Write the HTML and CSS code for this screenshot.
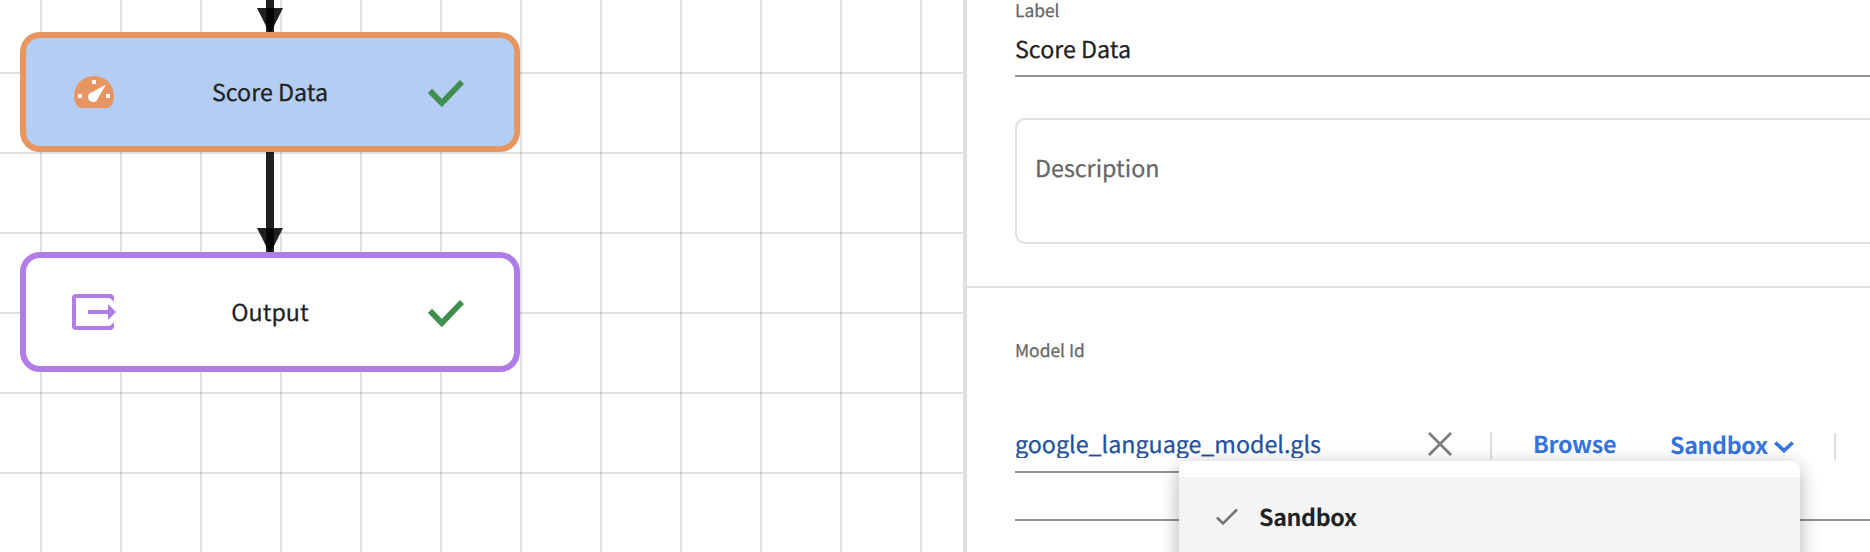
FILE: index.html
```html
<!DOCTYPE html>
<html lang="en">
<head>
<meta charset="utf-8">
<title>Score Data</title>
<link rel="stylesheet" href="styles.css">
</head>
<body>
<div class="app">
  <main class="canvas">
    <svg class="edges" width="963" height="552" viewBox="0 0 963 552">
      <g fill="#000" fill-opacity=".87">
        <path d="M266 0h8v32h-8z"/>
        <path d="M257 8h26l-12 24h-2z"/>
        <path d="M266 152h8v100h-8z"/>
        <path d="M257 228h26l-12 24h-2z"/>
      </g>
    </svg>
    <div class="node node-score">
      <svg class="node-icon" width="48" height="48" viewBox="0 0 48 48">
        <path fill="#e89661" d="M10 40C5.500 38 4 32 4 28a20 20 0 0 1 40 0c0 4-1.500 10-6 12z"/>
        <path fill="#fff" d="M22 12h4v4h-4zM8 26h4v4H8zM36 26h4v4h-4zM36 16.500L28.300 29.500C27.500 32.500 25.500 34 23 34a5 5 0 0 1-5-5c0-2.500 1.700-4.600 4.500-5z"/>
      </svg>
      <span class="node-title">Score Data</span>
      <svg class="node-check" width="36" height="28" viewBox="0 0 36 28"><path d="M2 10.800L13.800 23 34 2" fill="none" stroke="#418f50" stroke-width="5.800"/></svg>
    </div>
    <div class="node node-output">
      <svg class="node-icon" width="48" height="48" viewBox="0 0 48 48">
        <path fill="#b17ce5" d="M5 6h36q3 1 3 3v5l-4-4H6v28h34l4-4v5q0 2-3 3H5q-3-1-3-3V9q0-2 3-3z"/>
        <path fill="#b17ce5" d="M18 22h20v-6l8 8-8 8v-6H18z"/>
      </svg>
      <span class="node-title">Output</span>
      <svg class="node-check" width="36" height="28" viewBox="0 0 36 28"><path d="M2 10.800L13.800 23 34 2" fill="none" stroke="#418f50" stroke-width="5.800"/></svg>
    </div>
  </main>
  <aside class="panel">
    <section class="general">
      <div class="label">Label</div>
      <div class="input">Score Data</div>
      <div class="description">Description</div>
    </section>
    <section class="model">
      <div class="label">Model Id</div>
      <div class="model-row">
        <div class="model-field"><span class="model-name">google_language_model.gls</span>
          <svg class="clear" width="24" height="24" viewBox="0 0 24 24"><path d="M1 1l22 22M23 1L1 23" stroke="#7d7d7d" stroke-width="2.800"/></svg>
        </div>
        <span class="separator"></span>
        <span class="action browse">Browse</span>
        <span class="action source">Sandbox</span>
        <svg class="chevron" width="20" height="12" viewBox="0 0 20 12"><path d="M1.200 1.500L10 9.500l8.800-8" fill="none" stroke="#3574dc" stroke-width="3.600"/></svg>
        <span class="separator end"></span>
      </div>
      <div class="rule"></div>
      <div class="menu">
        <div class="menu-item">
          <svg width="22" height="18" viewBox="0 0 22 18"><path d="M1 9.500L7 15.500 21 1.500" fill="none" stroke="#767676" stroke-width="2.600"/></svg>
          <span class="menu-text">Sandbox</span>
        </div>
      </div>
    </section>
  </aside>
</div>
</body>
</html>
```

FILE: styles.css
```css
* { box-sizing: border-box; }
body {
  margin: 0;
  background: #fff;
  color: #212121;
  font-family: "Noto Sans CJK SC", "Noto Sans", sans-serif;
  font-size: 23.25px;
  line-height: 36px;
  text-rendering: geometricPrecision;
  -webkit-text-stroke: .25px;
}
svg { display: block; flex: none; }
.app { position: relative; display: flex; width: 1870px; height: 552px; overflow: hidden; }
.canvas {
  position: relative;
  width: 963px;
  flex: none;
  background-color: #fff;
  background-image:
    linear-gradient(90deg, rgba(0,0,0,.12) 2px, transparent 2px),
    linear-gradient(rgba(0,0,0,.12) 2px, transparent 2px);
  background-size: 80px 80px;
  background-position: 40px 72px;
}
.edges { position: absolute; left: 0; top: 0; }
.node {
  position: absolute;
  left: 20px;
  width: 500px;
  height: 120px;
  border: 6px solid;
  border-radius: 20px;
  display: grid;
  grid-template-columns: 48px 1fr 36px;
  align-items: center;
  padding: 0 50px 0 44px;
}
.node-score { top: 32px; background: #b4cdf3; border-color: #e89661; }
.node-output { top: 252px; background: #fff; border-color: #b17ce5; }
.node-title { justify-self: center; padding: 0 6px 2px 0; }
.node-check { margin-top: 4px; }

.panel { flex: 1; border-left: 4px solid #e0e0e0; }
.general { height: 288px; padding-left: 48px; border-bottom: 2px solid #e0e0e0; }
.label { height: 32px; font-size: 17.4px; line-height: 34px; color: #666; }
.general .label { height: 27px; line-height: 21px; }
.input { height: 50px; line-height: 42px; border-bottom: 2px solid #919191; }
.description {
  height: 126px;
  margin-top: 41px;
  padding: 29px 18px;
  border: 2px solid #e0e0e0;
  border-right: 0;
  border-radius: 10px 0 0 10px;
  color: #666;
}
.model { position: relative; height: 264px; padding: 46px 0 0 48px; }
.model-row { display: flex; height: 107px; padding-top: 51px; }
.model-field {
  width: 437px;
  height: 56px;
  display: flex;
  justify-content: space-between;
  border-bottom: 2px solid #919191;
  color: #23509c;
}
.model-name { height: 41px; line-height: 52px; overflow: hidden; }
.clear { margin-top: 15px; }
.separator { width: 2px; height: 27px; margin: 15px 0 0 38px; background: #ddd; }
.action { font-weight: 700; color: #3574dc; line-height: 52px; letter-spacing: -.35px; white-space: nowrap; -webkit-text-stroke: 0; }
.browse { margin-left: 41px; width: 137px; }
.source { width: 104px; line-height: 54px; }
.chevron { margin-top: 24px; }
.end { margin: 16px 0 0 40px; }
.rule { height: 48px; border-bottom: 2px solid #919191; }
.menu {
  position: absolute;
  left: 212px;
  top: 173px;
  width: 621px;
  height: 160px;
  padding-top: 16px;
  border-radius: 8px;
  background: #fff;
  box-shadow: 0 4px 20px rgba(0,0,0,.2), 0 8px 20px rgba(0,0,0,.12);
}
.menu-item {
  display: flex;
  align-items: center;
  height: 80px;
  padding-left: 37px;
  gap: 21px;
  background: #f4f4f4;
  font-weight: 700;
  letter-spacing: -.35px;
  -webkit-text-stroke: 0;
}
.menu-text { padding-bottom: 2px; }
```
